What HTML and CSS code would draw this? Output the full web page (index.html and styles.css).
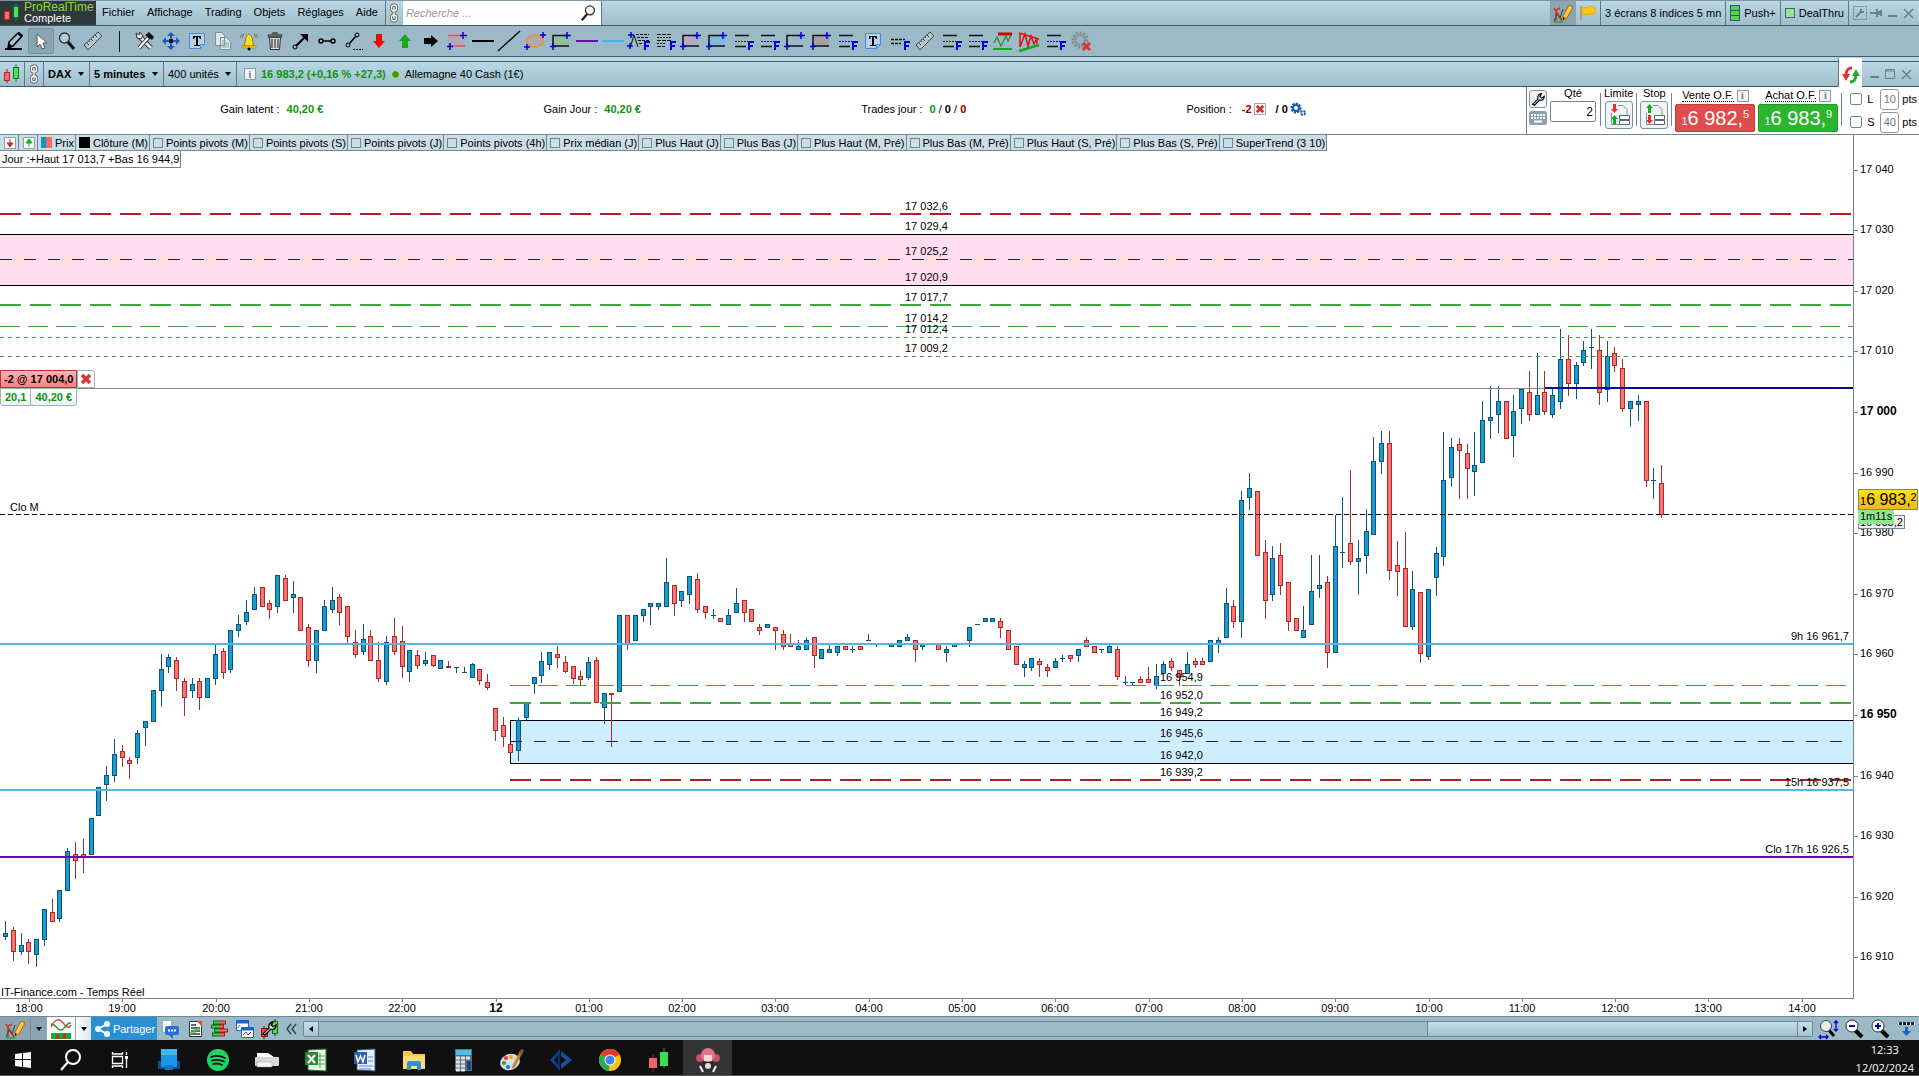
FILE: index.html
```
<!DOCTYPE html>
<html lang="fr">
<head>
    <meta charset="UTF-8">
    <meta name="viewport" content="width=device-width, initial-scale=1.0">
    <title>ProRealTime - DAX 5 minutes</title>
    <link rel="stylesheet" href="styles.css">
</head>
<body>
    <!-- Shared icons -->
    <svg class="defs" aria-hidden="true">
        <symbol id="i-candles" viewBox="0 0 18 20"><path d="M4 5v14" stroke="#a11" /><path d="M13 0v18" stroke="#185" /><rect x="1.500" y="8.500" width="5" height="8" fill="#f36b6b" stroke="#b22" /><rect x="10.500" y="3.500" width="5" height="11" fill="#4ddf5e" stroke="#196b2a" /></symbol>
        <symbol id="i-chain" viewBox="0 0 12 20"><g fill="none" stroke="#555" stroke-width="3"><rect x="3.500" y="2" width="5" height="6" rx="2.500" /><rect x="3.500" y="12" width="5" height="6" rx="2.500" /><path d="M6 6v8" /></g><g fill="none" stroke="#eee" stroke-width="1.500"><rect x="3.500" y="2" width="5" height="6" rx="2.500" /><rect x="3.500" y="12" width="5" height="6" rx="2.500" /><path d="M6 6v8" /></g></symbol>
        <symbol id="i-pencil" viewBox="0 0 24 24"><path d="M5 19l1-6L15 4l4 3-9 10z" fill="#a4c1cd" stroke="#000" stroke-width="1.500" /><path d="M5 19l1-5 3 3zM14 5l2-2 4 3-2 2z" /><path d="M2 20h17" stroke="#000" stroke-width="2" /></symbol>
        <symbol id="i-cursor" viewBox="0 0 24 24"><path d="M8 5v13l3-3 2 5 3-1-2-5h4z" fill="#fff" stroke="#555" /></symbol>
        <symbol id="i-lens" viewBox="0 0 24 24"><path d="M13 13l6 7" stroke="#111" stroke-width="3" /><circle cx="9.500" cy="9" r="5" fill="#b9cdd6" stroke="#333" stroke-width="1.300" /></symbol>
        <symbol id="i-ruler" viewBox="0 0 24 24"><path d="M3 16L17 3l4 4L7 21z" fill="#b3c5cd" stroke="#444" /><path d="M6 14l2 2M8 12l1 1M10 10l2 2M12 8l1 1M14 6l2 2" stroke="#444" fill="none" /></symbol>
        <symbol id="i-tools" viewBox="0 0 24 24"><path d="M5 6l13 13" stroke="#333" stroke-width="5" /><path d="M5 6l13 13" stroke="#eee" stroke-width="3" /><path d="M6 19L16 8" stroke="#333" stroke-width="4" /><path d="M6 19L15 9" stroke="#fff" stroke-width="2" /><path d="M12 6l4-3 5 5-2 3z" fill="#111" /><path d="M3 4l1 5 4 1 2-3-3-4-1 3z" fill="#eee" stroke="#333" /></symbol>
        <symbol id="i-move" viewBox="0 0 24 24"><path d="M12 3l4 4H8zM12 21l4-4H8zM3 12l4-4v8zM21 12l-4-4v8z" fill="#1c59c9" /><path d="M11 7h2v3h-2zM11 14h2v3h-2zM7 11h3v2H7zM14 11h3v2h-3z" fill="#1c59c9" /><path d="M10 10h4v4h-4z" fill="#111" /></symbol>
        <symbol id="i-text" viewBox="0 0 24 24"><path d="M4.500 4.500h15v11l-4 4h-11z" fill="#b5d3e4" stroke="#4b87e8" /><path d="M15.500 19.500v-4h4" fill="none" stroke="#4b87e8" /><path d="M8 7h8v3h-1l-1-2h-1v8h2v1H9v-1h2V8h-1l-1 2H8z" /></symbol>
        <symbol id="i-copy" viewBox="0 0 24 24"><path d="M4.500 3.500h6l3 3v10h-9zM9.500 8.500h6l4 4v8h-10z" fill="#dfe7ea" stroke="#7b8f98" /><path d="M11 12h4M11 14h7M11 16h7M11 18h7" stroke="#8aa" /></symbol>
        <symbol id="i-bell" viewBox="0 0 24 24"><path d="M7 17c2-2 0-10 5-12 5 2 3 10 5 12z" fill="#ffdc2d" stroke="#a07400" /><path d="M5 17h14v2H5z" fill="#f7c600" stroke="#a07400" stroke-width=".5" /><circle cx="12" cy="20" r="1.500" /><path d="M5 5L3 9M19 5l2 4M7 4L5 9M17 4l2 5" stroke="#777" fill="none" /></symbol>
        <symbol id="i-trash" viewBox="0 0 24 24"><path d="M6.500 8.500h11l-1 12h-9z" fill="#ddd" stroke="#333" /><path d="M5.500 6h13v2h-13zM10 5V4h4v1M9 10v9M12 10v9M15 10v9" stroke="#444" fill="none" stroke-width="1.300" /></symbol>
        <symbol id="i-arrow" viewBox="0 0 24 24"><path d="M6 18L16 8" stroke="#000" stroke-width="2" /><path d="M11 5h8v8z" /><circle cx="6" cy="18" r="2" fill="#9bb9c7" stroke="#000" /></symbol>
        <symbol id="i-segment" viewBox="0 0 24 24"><path d="M8 12h8" stroke="#000" stroke-width="1.500" /><circle cx="6" cy="12" r="2" fill="none" stroke="#000" stroke-width="1.500" /><circle cx="18" cy="12" r="2" fill="none" stroke="#000" stroke-width="1.500" /></symbol>
        <symbol id="i-slope" viewBox="0 0 24 24"><path d="M8 15l7-8" stroke="#000" stroke-width="1.500" /><circle cx="7" cy="16" r="2" fill="none" stroke="#000" /><circle cx="16" cy="6" r="2" fill="none" stroke="#000" /><path d="M12 20.500h10" stroke="#000" stroke-dasharray="2 1" /></symbol>
        <symbol id="i-up" viewBox="0 0 24 24"><path d="M12 5l6 7h-3v7H9v-7H6z" /></symbol>
        <symbol id="i-right" viewBox="0 0 24 24"><path d="M5 9h7V6l7 6-7 6v-3H5z" /></symbol>
        <symbol id="i-zone" viewBox="0 0 24 24"><path d="M3 6.500h17v10H3z" /><path d="M3 6.500h17M3 17h17" stroke-width="1.500" stroke="currentColor" /><path d="M18 3v7M15 6.500h7M5 14v7M2 17.500h6" stroke="#00d" stroke-width="1.500" /></symbol>
        <symbol id="i-box" viewBox="0 0 24 24"><path d="M4 6.500h16v10H4z" /><path d="M20 6.500H4V17h16" stroke-width="1.500" stroke="#111" fill="none" /><path d="M18 3v7M15 6.500h7M4 14v7M1 17.500h6" stroke="#00d" stroke-width="1.500" /></symbol>
        <symbol id="i-hline" viewBox="0 0 24 24"><path d="M1 12h22" stroke="currentColor" stroke-width="2" /></symbol>
        <symbol id="i-diag" viewBox="0 0 24 24"><path d="M1 22L23 2" stroke="#111" stroke-width="1.500" /></symbol>
        <symbol id="i-ellipse" viewBox="0 0 24 24"><ellipse cx="12" cy="12" rx="8" ry="6" fill="#b0a9ae" stroke="#f18a3c" stroke-width="1.500" /><path d="M20 3v6M17 6h6M4 15v6M1 18h6" stroke="#00d" stroke-width="1.500" /></symbol>
        <symbol id="i-fibo" viewBox="0 0 24 24"><path d="M4 6.500h14M4 17.500h11" stroke="#111" stroke-width="1.500" /><path d="M4 12.500h14" stroke="#00d" stroke-dasharray="2 1" /><path d="M18 21v-8h5M18 17h4" fill="none" stroke="#00d" stroke-width="2" /></symbol>
        <symbol id="i-rows" viewBox="0 0 24 24"><path d="M4 5.500h14M4 11.500h14M4 17.500h8" stroke="#111" stroke-dasharray="4 1" /><path d="M4 8.500h14M4 14.500h8" stroke="#111" stroke-dasharray="2 1" /><path d="M18 21v-8h5M18 17h4" fill="none" stroke="#00d" stroke-width="2" /></symbol>
        <symbol id="i-abc" viewBox="0 0 24 24"><path d="M3 19l4-13 4 12" fill="none" stroke="#111" /><path d="M9 5.500h13M10 8.500h12M11 11.500h11M12 14.500h4" stroke="#111" stroke-dasharray="3 1" /><path d="M4 3v6M1 6h6M3 14v6M0 17h6" stroke="#00d" stroke-width="1.500" /><path d="M18 21v-8h5M18 17h4" fill="none" stroke="#00d" stroke-width="2" /></symbol>
        <symbol id="i-short" viewBox="0 0 24 24"><path d="M4 10.500h14M4 14.500h10" stroke="#111" stroke-dasharray="3 1" stroke-width="1.500" /><path d="M18 21v-8h5M18 17h4" fill="none" stroke="#00d" stroke-width="2" /></symbol>
        <symbol id="i-range" viewBox="0 0 24 24"><path d="M7 5h14" stroke="#c00" stroke-width="3" /><path d="M3 14l3-6 4 9 5-10 2 5 3-6" fill="none" stroke="#292" stroke-width="1.300" /><path d="M2 20h19" stroke="#1a2" stroke-width="2" /></symbol>
        <symbol id="i-wedge" viewBox="0 0 24 24"><path d="M2 4l20 6M3 4v14l5-13 3 12 3-10 3 8 3-6v6" fill="none" stroke="#d11" stroke-width="1.500" /><path d="M2 22l20-6" stroke="#1a2" stroke-width="2.500" /></symbol>
        <symbol id="i-gone" viewBox="0 0 24 24"><circle cx="11" cy="11" r="6" fill="none" stroke="#80919a" stroke-width="5" stroke-dasharray="2 1" /><path d="M14 14l7 7M21 14l-7 7" stroke="#d33" stroke-width="3" /></symbol>
        <symbol id="i-search" viewBox="0 0 20 20"><path d="M8 11l-6 7" stroke="#222" stroke-width="2.500" /><circle cx="11" cy="7" r="5" fill="#eef2f4" stroke="#333" stroke-width="1.500" /></symbol>
        <symbol id="i-drawchart" viewBox="0 0 22 22"><path d="M2 6l8 13M4 19V8l4-2" stroke="#c33" stroke-width="1.500" fill="none" /><path d="M2 19l3-7 3 4 3-9" stroke="#253" fill="none" /><path d="M2 20h9" stroke="#2a4" stroke-width="1.500" /><path d="M11 18v-4l6-11 4 2-6 11z" fill="#ffc83c" stroke="#a36a10" /><path d="M11 18v-3l2 1z" /></symbol>
        <symbol id="i-flag" viewBox="0 0 20 20"><path d="M3 3v14" stroke="#a87" stroke-width="1.500" /><path d="M4 4c4 2 7-2 13 0v7c-6-1-8 2-13 0z" fill="#ffc61a" stroke="#f0a800" /></symbol>
        <symbol id="i-wrench" viewBox="0 0 18 18"><path d="M3 15l6-6c-1-3 1-6 4-6l-2 3 2 2 3-2c0 4-3 5-5 4l-6 6z" fill="#fff" stroke="currentColor" stroke-width="1.300" /></symbol>
        <symbol id="i-keyboard" viewBox="0 0 18 14"><rect width="18" height="14" rx="2" fill="#8ba2ae" /><path d="M2 4h14M2 7h14" stroke="#fff" stroke-width="2" stroke-dasharray="2 1" /><path d="M5 10.500h8" stroke="#fff" stroke-width="2" /></symbol>
        <symbol id="i-limit" viewBox="0 0 24 24"><path d="M11 2.500h5l4 4v6M4.500 10v11.500h8" fill="none" stroke="#889" /><path d="M6 1h3v5h2l-3.500 4L4 6h2z" fill="#d33" /><path d="M6 21h3v-5h2l-3.500-4L4 16h2z" fill="#1a2" /><path d="M12.500 12.500h10v4h-10zM12.500 17.500h10v4h-10z" fill="#fff" stroke="#567" /></symbol>
        <symbol id="i-stop" viewBox="0 0 24 24"><path d="M11 2.500h5l4 4v6M4.500 10v11.500h8" fill="none" stroke="#889" /><path d="M6 10h3V5h2L7.500 1 4 5h2z" fill="#1a2" /><path d="M6 12h3v5h2l-3.500 4L4 17h2z" fill="#d33" /><path d="M12.500 12.500h10v4h-10zM12.500 17.500h10v4h-10z" fill="#fff" stroke="#567" /></symbol>
        <symbol id="i-cross" viewBox="0 0 12 12"><path d="M2 2l8 8M10 2l-8 8" stroke="#d03838" stroke-width="3.500" /></symbol>
        <symbol id="i-min" viewBox="0 0 14 14"><path d="M3 10h9" stroke="#67818e" stroke-width="2" /></symbol>
        <symbol id="i-max" viewBox="0 0 14 14"><path d="M2.500 2.500h9v9h-9zM2 4h10" stroke="#67818e" fill="none" /></symbol>
        <symbol id="i-close" viewBox="0 0 14 14"><path d="M3 3l9 9M12 3l-9 9" stroke="#67818e" stroke-width="1.500" /></symbol>
        <symbol id="i-swap" viewBox="0 0 20 20"><path d="M11 3C6 3 5 6 5 11" fill="none" stroke="#d33" stroke-width="3" /><path d="M1 9l4 7 4-7z" fill="#d33" /><path d="M9 17c5 0 6-3 6-8" fill="none" stroke="#2a3" stroke-width="3" /><path d="M11 11l4-7 4 7z" fill="#2a3" /></symbol>
        <symbol id="i-gears" viewBox="0 0 16 14"><circle cx="6" cy="6" r="4" fill="none" stroke="#1b5ba8" stroke-width="3" stroke-dasharray="2 1" /><circle cx="6" cy="6" r="3" fill="none" stroke="#1b5ba8" stroke-width="2" /><circle cx="13" cy="11" r="2" fill="none" stroke="#1b5ba8" stroke-width="2" stroke-dasharray="2 1" /></symbol>
    </svg>

    <header class="menubar">
        <div class="logo">
            <svg width="18" height="20"><use href="#i-candles" /></svg>
            <div><b>ProRealTime</b><span>Complete</span></div>
        </div>
        <nav class="menu">
            <a href="#">Fichier</a><a href="#">Affichage</a><a href="#">Trading</a><a href="#">Objets</a><a href="#">Réglages</a><a href="#">Aide</a>
        </nav>
        <button class="chain" aria-label="Lier"><svg width="12" height="20"><use href="#i-chain" /></svg></button>
        <div class="search">
            <input type="text" placeholder="Recherche ..." aria-label="Recherche">
            <svg width="18" height="18"><use href="#i-search" /></svg>
        </div>
        <div class="menubar-right">
            <button class="cell pressed" aria-label="Dessin"><svg width="22" height="22"><use href="#i-drawchart" /></svg></button>
            <button class="cell" aria-label="Drapeau"><svg width="20" height="20"><use href="#i-flag" /></svg></button>
            <span class="cell ruled workspace">3 écrans 8 indices 5 mn</span>
            <span class="cell ruled"><i class="push"></i>Push+</span>
            <span class="cell ruled"><i class="deal"></i>DealThru</span>
            <span class="cell ruled window-buttons">
                <svg width="14" height="14"><rect x=".5" y=".5" width="13" height="13" fill="none" stroke="#67818e" stroke-dasharray="2 1" /><path d="M3 11l6-6M8 3v3h3" fill="none" stroke="#67818e" stroke-width="2" /></svg>
                <svg width="14" height="14"><path d="M1 7h6M8 3v8M12 4v6" stroke="#67818e" stroke-width="2" /><path d="M8 5h5v4H8z" fill="#67818e" /></svg>
                <svg width="14" height="14"><use href="#i-min" /></svg>
                <svg width="14" height="14"><use href="#i-close" /></svg>
            </span>
        </div>
    </header>

    <div class="toolbar" id="toolbar"></div>
    <div class="strip"></div>

    <div class="docbar">
        <span class="cell"><svg width="18" height="20"><use href="#i-candles" /></svg></span>
        <button class="cell ruled" aria-label="Lier"><svg width="12" height="20"><use href="#i-chain" /></svg></button>
        <label class="cell ruled drop bold"><select aria-label="Instrument"><option>DAX</option></select></label>
        <label class="cell ruled drop bold"><select aria-label="Unité de temps"><option>5 minutes</option></select></label>
        <label class="cell ruled drop"><select aria-label="Historique"><option>400 unités</option></select></label>
        <div class="cell ruled quote">
            <button class="info">i</button>
            <b class="green">16 983,2 (+0,16 % +27,3)</b>
            <i class="dot"></i>
            <span>Allemagne 40 Cash (1€)</span>
        </div>
        <div class="docbar-right">
            <button class="swap" aria-label="Trading"><svg width="20" height="20"><use href="#i-swap" /></svg></button>
            <svg width="14" height="14"><use href="#i-min" /></svg>
            <svg width="14" height="14"><use href="#i-max" /></svg>
            <svg width="14" height="14"><use href="#i-close" /></svg>
        </div>
    </div>

    <section class="trading">
        <div class="gains">
            <div><span>Gain latent :</span><b class="green">40,20 €</b></div>
            <div><span>Gain Jour :</span><b class="green">40,20 €</b></div>
            <div><span>Trades jour :</span><span><b class="green">0</b> / <b>0</b> / <b class="darkred">0</b></span></div>
            <div class="position"><span>Position :</span><b class="darkred">-2</b><button class="kill" aria-label="Fermer la position"><svg width="10" height="10"><use href="#i-cross" /></svg></button><b class="total">/ 0</b><svg width="16" height="14"><use href="#i-gears" /></svg></div>
        </div>
        <div class="order">
            <div class="order-tools">
                <button class="square" aria-label="Options"><svg width="16" height="16"><use href="#i-wrench" /></svg></button>
                <svg width="18" height="14"><use href="#i-keyboard" /></svg>
            </div>
            <div class="stack qty"><label for="qty">Qté</label><input type="text" id="qty" value="2"></div>
            <div class="stack sep"><span>Limite</span><button class="ticket" aria-label="Ordre limite"><svg width="24" height="24"><use href="#i-limit" /></svg></button></div>
            <div class="stack sep"><span>Stop</span><button class="ticket" aria-label="Ordre stop"><svg width="24" height="24"><use href="#i-stop" /></svg></button></div>
            <div class="stack sep deal-col">
                <span><u>Vente O.F.</u><button class="info">i</button></span>
                <button class="price sell"><small>1</small>6 982,<sup>5</sup></button>
            </div>
            <div class="stack deal-col">
                <span><u>Achat O.F.</u><button class="info">i</button></span>
                <button class="price buy"><small>1</small>6 983,<sup>9</sup></button>
            </div>
            <div class="protect sep">
                <div><input type="checkbox" id="use-l"><label for="use-l">L</label><input type="text" value="10" aria-label="Limite en points"><span>pts</span></div>
                <div><input type="checkbox" id="use-s"><label for="use-s">S</label><input type="text" value="40" aria-label="Stop en points"><span>pts</span></div>
            </div>
        </div>
    </section>

    <main class="chart">
        <div class="plot">
            <svg id="plot" width="100%" height="100%"></svg>
            <div class="legend">
                <button aria-label="Réduire"><svg width="14" height="14"><path d="M1.500 1.500h11v11h-11z" fill="#fff" stroke="#8ba2ae" /><path d="M7 3v5M4 7l3 4 3-4z" fill="#d22" stroke="#d22" /></svg></button>
                <button aria-label="Agrandir"><svg width="14" height="14"><path d="M1.500 1.500h11v11h-11z" fill="#fff" stroke="#8ba2ae" /><path d="M7 11V6M4 7l3-4 3 4z" fill="#1a2" stroke="#1a2" /></svg></button>
                <span><i class="swatch price-colors"></i>Prix</span>
                <span><i class="swatch black"></i>Clôture (M)</span>
                <label><input type="checkbox">Points pivots (M)</label>
                <label><input type="checkbox">Points pivots (S)</label>
                <label><input type="checkbox">Points pivots (J)</label>
                <label><input type="checkbox">Points pivots (4h)</label>
                <label><input type="checkbox">Prix médian (J)</label>
                <label><input type="checkbox">Plus Haut (J)</label>
                <label><input type="checkbox">Plus Bas (J)</label>
                <label><input type="checkbox">Plus Haut (M, Pré)</label>
                <label><input type="checkbox">Plus Bas (M, Pré)</label>
                <label><input type="checkbox">Plus Haut (S, Pré)</label>
                <label><input type="checkbox">Plus Bas (S, Pré)</label>
                <label><input type="checkbox">SuperTrend (3 10)</label>
            </div>
            <div class="day-range">Jour :+Haut 17 013,7 +Bas 16 944,9</div>
            <div class="open-position">
                <div><b class="entry">-2 @ 17 004,0</b><button aria-label="Fermer"><svg width="12" height="12"><use href="#i-cross" /></svg></button></div>
                <div><b class="green pnl">20,1</b><b class="green pnl last">40,20 €</b></div>
            </div>
            <div class="source">IT-Finance.com - Temps Réel</div>
        </div>
        <div class="price-axis">
            <svg id="price-axis" width="100%" height="100%"></svg>
            <div class="close-tag">16 983,2</div>
            <div class="last-tag"><small>1</small>6 983,<sup>2</sup></div>
            <div class="timer-tag">1m11s</div>
        </div>
    </main>
    <svg class="time-axis" id="time-axis" width="100%" height="17"></svg>

    <div class="bottombar">
        <button class="pressed draw" aria-label="Dessin"><svg width="22" height="22"><use href="#i-drawchart" /></svg></button>
        <button class="caret pressed" aria-label="Menu dessin"></button>
        <button class="white" aria-label="Indicateurs"><svg width="28" height="22"><path d="M4 9c5-10 9-8 13-3s5 4 7 1" fill="none" stroke="#d44" stroke-width="1.500" /><path d="M4 6c5 0 6 6 10 6s5-8 10-7" fill="none" stroke="#292" stroke-width="1.500" /><path d="M4 15h20v6H4z" fill="#1a3" /><path d="M9 21v-4h3v4M16 21v-5h3v5" fill="#d22" /></svg></button>
        <button class="caret light" aria-label="Menu indicateurs"></button>
        <button class="share"><svg width="18" height="18"><path d="M14 4L5 9l9 5" fill="none" stroke="#fff" stroke-width="2" /><circle cx="14" cy="4" r="3" fill="#fff" /><circle cx="5" cy="9" r="3" fill="#fff" /><circle cx="14" cy="14" r="3" fill="#fff" /></svg>Partager</button>
        <div class="bottom-icons">
            <svg width="20" height="20"><path d="M2.500 1.500h9v12h-9z" fill="#fff" stroke="#7ba" /><rect x="5" y="7" width="14" height="9" rx="2" fill="#2a6fd8" /><path d="M13 16v4l-4-4z" fill="#2a6fd8" /><path d="M8 11.500h9" stroke="#fff" stroke-width="2" stroke-dasharray="2 1" /></svg>
            <svg width="20" height="20"><path d="M4.500 2.500h12v15h-12z" fill="#fff" stroke="#333" /><path d="M12 2h5v6z" fill="#e44" /><path d="M6 6h5M6 9h9M6 12h9M6 15h9" stroke="#333" stroke-width="1.500" /><path d="M5 13l10-6v4L5 17z" fill="#3b4" opacity=".7" /></svg>
            <svg width="20" height="20"><path d="M3 3.500h7M1 7.500h9M4 11.500h6M2 15.500h8" stroke="#175f20" stroke-width="4" /><path d="M10 3.500h6M10 7.500h4M10 11.500h8M10 15.500h5" stroke="#a11f1f" stroke-width="4" /><path d="M4 3.500h6M2 7.500h8M5 11.500h5M3 15.500h7" stroke="#3ed44d" stroke-width="2" /><path d="M10 3.500h5M10 7.500h3M10 11.500h7M10 15.500h4" stroke="#f66" stroke-width="2" /></svg>
            <svg width="20" height="20"><path d="M1.500 1.500h12v10h-12z" fill="#fff" stroke="#1b64c8" /><path d="M1 3h13" stroke="#1b64c8" stroke-width="3" /><path d="M6.500 8.500h12v10h-12z" fill="#fff" stroke="#1b64c8" /><path d="M6 10h13" stroke="#1b64c8" stroke-width="3" /><path d="M8 16l3-3 2 3 3-3" fill="none" stroke="#d22" /><path d="M3 9l2-3" stroke="#2a2" /></svg>
            <svg width="20" height="20"><path d="M4 7v13M15 0v17" stroke="#222" /><path d="M1.500 9.500h6v8h-6z" fill="#e44" stroke="#911" /><path d="M12.500 2.500h5v12h-5z" fill="#4d5" stroke="#161" /><g color="#000"><use href="#i-wrench" width="18" height="18" /></g></svg>
            <svg width="14" height="20"><path d="M6 5l-4 5 4 5M11 5l-4 5 4 5" fill="none" stroke="#345" stroke-width="1.500" /></svg>
        </div>
        <div class="scrollbar">
            <button class="scroll-btn left" aria-label="Reculer"></button>
            <div class="track"></div>
            <div class="thumb"></div>
            <button class="scroll-btn right" aria-label="Avancer"></button>
        </div>
        <div class="zooms">
            <svg width="22" height="22"><path d="M11 11l6 7" stroke="#000" stroke-width="3" /><circle cx="9" cy="8" r="5.500" fill="#e8edef" stroke="#444" /><path d="M19 3v9M17 5l2-2 2 2M17 11l2 2 2-2M2 19h9M4 17l-2 2 2 2M9 17l2 2-2 2" fill="none" stroke="#00d" stroke-width="1.300" /></svg>
            <svg width="22" height="22"><path d="M12 12l7 7" stroke="#000" stroke-width="4" /><circle cx="9" cy="8" r="6" fill="#fff" stroke="#333" /><path d="M6 8h6" stroke="#00c" stroke-width="2" /></svg>
            <svg width="22" height="22"><path d="M12 12l7 7" stroke="#000" stroke-width="4" /><circle cx="9" cy="8" r="6" fill="#fff" stroke="#333" /><path d="M6 8h6M9 5v6" stroke="#00c" stroke-width="2" /></svg>
            <svg width="22" height="22"><path d="M2.500 3.500h18v4h-18z" fill="#fff" stroke="#9ab" /><path d="M4 5.500h15" stroke="#222" stroke-width="3" stroke-dasharray="3 1" /><path d="M10 9h3v4h3l-4.500 5L7 13h3z" fill="#1b64c8" /></svg>
        </div>
    </div>

    <footer class="taskbar">
        <button aria-label="Démarrer"><svg width="24" height="24"><path d="M4 6l7-1v6H4zM12 5l8-1v7h-8zM4 12h7v7l-7-1zM12 12h8v8l-8-1z" fill="#fff" /></svg></button>
        <button aria-label="Rechercher"><svg width="24" height="24"><circle cx="14" cy="9" r="7" fill="none" stroke="#fff" stroke-width="2" /><path d="M9 14l-7 8" stroke="#fff" stroke-width="2" /></svg></button>
        <button aria-label="Vue des tâches"><svg width="24" height="24"><path d="M4.500 8.500h10v7h-10zM4.500 4v2h10V4M4.500 20v-2h10v2M18.500 4v3M18.500 9v11" fill="none" stroke="#fff" stroke-width="1.300" /><path d="M17 8h3v3h-3z" fill="#fff" /></svg></button>
        <button aria-label="Bureau à distance"><svg width="26" height="24"><path d="M2 13h22v8H2z" fill="#0c4f91" /><path d="M5 1h16v18H5z" fill="#1698e8" /><path d="M5 1h16v6H5z" fill="#42b6f5" /><path d="M9 17h8v5H9z" fill="#0d76c6" /></svg></button>
        <button aria-label="Spotify"><svg width="24" height="24"><circle cx="12" cy="12" r="11" fill="#1ed760" /><path d="M5 9c5-2 10-1 14 1M6 12.500c4-1 8-1 12 1M7 16c4-1 6-1 9 1" fill="none" stroke="#111" stroke-width="1.800" stroke-linecap="round" /></svg></button>
        <button aria-label="Imprimante"><svg width="26" height="24"><path d="M3 5h11l6 4v3H3z" fill="#fff" /><rect x="1" y="9" width="24" height="9" rx="1" fill="#d5d8da" /><path d="M3 14h15v5H3z" fill="#f4f4f4" stroke="#999" stroke-width=".5" /></svg></button>
        <button aria-label="Excel"><svg width="24" height="24"><path d="M4 2l18-1v22L4 22z" fill="#e8f3e6" stroke="#287a35" /><path d="M16 5v15M21 8h-7M21 12h-7M21 16h-7" stroke="#57a35b" /><path d="M1 4h13v13H1z" fill="#2d8537" /><path d="M4 7l7 8M11 7l-7 8" stroke="#fff" stroke-width="2" /></svg></button>
        <button aria-label="Word"><svg width="24" height="24"><path d="M4 2l18-1v22L4 22z" fill="#e6eef8" stroke="#2b5797" /><path d="M6 18h14M15 9h5M15 13h5M6 21h12" stroke="#5e88bf" /><path d="M1 4h13v12H1z" fill="#2b5fb0" /><path d="M3 7l2 7 2.500-6L10 14l2-7" fill="none" stroke="#fff" stroke-width="1.500" /></svg></button>
        <button aria-label="Explorateur"><svg width="24" height="24"><path d="M1 3h8l2 3h12v15H1z" fill="#f9c646" /><path d="M1 8h22v13H1z" fill="#ffdb74" /><path d="M5 22v-7q0-2 2-2h10q2 0 2 2v7h-4v-4H9v4z" fill="#2e8fd8" /></svg></button>
        <button aria-label="Calculatrice"><svg width="24" height="24"><path d="M4 1h17v22H4z" fill="#5e6d78" /><path d="M5 2h15v5H5z" fill="#3fc3ee" /><path d="M5 10h15M5 14h10M5 18h10M5 22h10" stroke="#dfe5e8" stroke-width="3" stroke-dasharray="4 1" /><path d="M16 13h4v9h-4z" fill="#124a7c" /></svg></button>
        <button aria-label="Paint"><svg width="26" height="24"><ellipse cx="11" cy="14" rx="10" ry="8" fill="#cfdde8" transform="rotate(-20 11 14)" /><circle cx="5" cy="15" r="2" fill="#29a329" /><circle cx="7" cy="10" r="2" fill="#e33" /><circle cx="12" cy="9" r="2" fill="#f5a21b" /><circle cx="9" cy="19" r="2" fill="#2a6fd8" /><path d="M14 20L22 4" stroke="#c9812e" stroke-width="3" /><path d="M20 6l2-5 3 1-2 5z" fill="#8a5225" /></svg></button>
        <button aria-label="Application"><svg width="24" height="24"><path d="M11 1L1 12l10 11v-4l-6-7 6-7z" fill="#123f8c" /><path d="M12 3l11 9-11 9v-5l5-4-5-4z" fill="#1b4ea0" /><path d="M10 6v12" stroke="#0d2f6e" stroke-width="2" /></svg></button>
        <button aria-label="Chrome"><svg width="24" height="24"><circle cx="12" cy="12" r="11" fill="#fbc116" /><path d="M12 12L2.500 6.500A11 11 0 0 1 21.500 6.500z" fill="#e33b2e" /><path d="M12 12L2.500 6.500A11 11 0 0 0 11 23z" fill="#2da94f" /><circle cx="12" cy="12" r="5.500" fill="#fff" /><circle cx="12" cy="12" r="4.500" fill="#4285f4" /></svg></button>
        <button aria-label="ProRealTime"><svg width="24" height="24"><path d="M6 6v18" stroke="#a22" /><path d="M17 0v20" stroke="#2a3" /><path d="M2 10h8v10H2z" fill="#f06565" /><path d="M13 4h8v14h-8z" fill="#3edc52" /></svg></button>
        <button class="active" aria-label="Capture"><svg width="26" height="26"><circle cx="5" cy="11" r="4" fill="#c94f6d" /><circle cx="21" cy="11" r="4" fill="#c94f6d" /><circle cx="13" cy="8" r="7" fill="#e2738d" /><path d="M9 8h8v6H9z" fill="#f8d9c8" /><path d="M7 15h12v9H7z" fill="#2b2b30" /><circle cx="13" cy="19" r="3" fill="#ddd" /><path d="M5 19l3 6M21 19l-3 6" stroke="#eee" stroke-width="2" /></svg></button>
        <div class="clock"><span>12:33</span><span>12/02/2024</span></div>
    </footer>

    <script>
        // Drawing toolbar, one 26px slot per tool: [icon, fill, color]
        const tools = [
            ['pencil'], ['cursor'], ['lens'], ['ruler'], ['bar'], ['tools'], ['move'], ['text'], ['copy'], ['bell'], ['trash'],
            ['arrow'], ['segment'], ['slope'], ['down', '#f00'], ['up', '#1aa81a'], ['right', '#000'], ['zone', '#b1a9b8', '#e05555'],
            ['hline', '', '#000'], ['diag'], ['ellipse'], ['box', '#8fbf9f'], ['hline', '', '#6a0dad'], ['hline', '', '#45b4ee'],
            ['abc'], ['rows'], ['box', '#b7a9c8'], ['box', '#7fb9d6'], ['fibo'], ['fibo'], ['box', 'none'], ['box', '#a99fa4'],
            ['fibo'], ['text'], ['short'], ['ruler'], ['fibo'], ['fibo'], ['range'], ['wedge'], ['fibo'], ['gone']
        ];
        document.getElementById('toolbar').innerHTML = tools.map(([name, fill, color]) => {
            if (name === 'bar') return '<span class="tool-sep"></span>';
            const cls = name === 'cursor' ? 'tool pressed' : name === 'down' ? 'tool flip' : 'tool';
            const icon = name === 'down' ? 'up' : name;
            return `<button class="${cls}" aria-label="${name}"><svg width="24" height="24" fill="${fill || '#000'}" color="${color || '#000'}"><use href="#i-${icon}" /></svg></button>`;
        }).join('');

        // Vertical positions are counted from the top of the window
        const TOP = 135;
        const STEP = 7.775;
        const FIRST = 5;

        // up/down, high, body top, body bottom, low
        const candles = `
            u 921 933 937 940,d 927 930 952 961,u 933 945 952 955,d 939 942 952 964,u 939 939 955 967,u 909 909 940 946
            d 899 912 922 922,u 890 890 919 922,u 848 851 891 891,d 842 854 861 879,d 839 854 857 873,u 818 818 855 855
            u 787 787 816 816,u 766 775 785 801,u 739 754 776 782,d 745 751 758 767,d 757 760 764 779,u 730 733 758 764
            u 721 721 728 746,u 690 690 722 722,u 654 669 691 707,u 654 657 667 673,d 657 660 679 691,d 678 681 698 716
            u 678 684 691 698,d 678 681 698 710,u 678 678 698 698,u 645 654 679 685,d 648 651 673 679,u 630 630 670 673
            u 615 624 631 637,u 600 612 622 625,u 587 594 610 610,d 587 587 607 607,d 600 603 610 619,u 575 575 607 613
            d 575 578 601 601,u 581 594 598 613,d 597 597 631 631,d 624 627 661 667,u 630 630 661 673,u 600 606 631 631
            u 587 600 610 613,d 594 597 613 625,d 606 606 637 643,d 630 642 655 658,u 624 639 652 655,d 630 636 661 661
            d 642 660 679 682,u 636 642 682 685,d 618 636 652 655,d 626 641 667 678,u 650 650 672 682,d 650 655 666 669
            u 652 660 664 666,d 655 655 666 667,u 660 660 669 669,d 661 666 668 668,u 667 667 668 673,u 667 672 673 673
            u 663 664 678 678,d 669 669 681 685,d 674 682 688 690,d 708 708 731 741,d 717 725 737 747,d 744 744 753 753
            u 717 720 751 761,u 703 703 718 720,u 677 677 684 694,u 652 661 676 683,u 652 652 665 670,d 646 654 658 668
            d 656 662 672 673,d 666 666 679 684,d 671 676 680 685,u 657 662 678 680,d 657 660 703 703,u 693 693 708 724
            d 693 693 695 747,u 615 615 692 692,d 615 615 644 650,u 615 615 641 641,u 609 609 616 622,u 603 603 607 625
            u 603 603 607 610,u 558 582 607 607,d 585 585 604 616,u 591 591 601 607,u 576 576 595 604,d 573 579 610 613
            d 606 606 613 619,u 609 615 616 619,d 618 618 622 622,u 609 615 625 625,u 588 603 613 613,d 600 600 613 622
            d 609 609 622 622,d 624 627 631 635,u 624 624 628 628,d 627 627 631 650,d 630 634 647 650,d 634 643 647 647
            u 640 646 650 650,u 637 640 650 650,d 637 637 656 668,u 649 649 659 659,u 645 649 653 653,u 646 646 653 656
            d 646 646 650 650,u 646 649 650 653,d 646 646 650 650,u 634 640 641 641,u 644 644 645 647,u 643 643 645 645
            u 643 643 647 647,u 640 640 647 647,u 634 637 641 641,d 640 640 650 662,u 643 643 647 650,u 643 643 645 645
            d 643 643 650 650,u 646 649 653 662,u 643 643 647 647,u 643 643 645 645,u 627 627 641 647,u 624 624 625 625
            u 618 618 622 622,u 618 618 622 622,d 618 621 628 638,d 630 630 650 650,d 646 646 665 665,u 661 664 668 677
            u 658 658 668 671,d 658 661 665 677,d 664 667 671 677,u 658 661 668 668,u 655 658 659 662,d 655 655 659 662
            u 649 649 656 662,d 637 640 647 647,d 646 646 653 653,u 649 649 650 653,u 645 646 653 653,d 646 649 677 680
            u 676 682 683 685,u 682 682 683 685,d 676 679 683 683,d 667 679 683 683,u 664 676 686 689,u 661 664 674 674
            d 658 661 668 671,d 670 670 677 686,u 652 664 674 674,d 658 661 665 668,d 658 661 665 665,u 640 640 662 662
            u 637 640 644 653,u 588 603 638 638,d 600 606 622 628,u 491 500 622 638,u 473 488 498 510,d 491 491 556 556
            d 540 552 601 619,u 546 558 595 601,d 543 555 586 595,d 582 582 622 631,d 618 618 631 631,u 606 630 638 638
            u 555 591 625 625,u 555 585 589 598,d 576 582 653 668,u 515 546 653 653,u 497 552 553 568,d 470 543 562 565
            u 540 558 562 595,u 509 531 556 574,u 437 461 535 535,u 431 443 462 474,d 431 443 571 580,d 541 565 572 596
            d 532 568 627 627,u 571 589 627 630,d 592 592 654 663,u 589 589 657 660,u 547 553 578 596,u 432 480 557 566
            u 438 447 478 487,d 438 444 451 499,d 444 453 469 499,u 432 465 472 496,u 401 420 463 463,u 386 417 421 439
            u 386 401 415 433,d 401 401 439 439,u 395 411 436 457,u 389 389 409 424,d 371 392 415 421,u 353 395 415 415
            d 371 392 412 415,u 388 395 415 418,u 329 359 402 409,d 335 359 384 396,u 362 365 384 399,u 341 350 363 366
            u 329 347 348 369,d 335 350 393 405,u 341 356 390 402,d 347 353 366 372,d 359 368 409 412,u 401 401 409 427
            u 395 401 405 421,d 401 401 481 487,u 468 480 481 499,d 465 483 515 518`.trim().split(/,|\n/);

        const line = (cls, y, x = 0) => `<line class="${cls}" x1="${x}" x2="100%" y1="${y - TOP}" y2="${y - TOP}" />`;
        const zone = (cls, x, y, h) => `<rect class="zone ${cls}" x="${x}" y="${y - TOP}" width="101%" height="${h}" />`;
        const label = (x, y, text) => `<text x="${x}" y="${y - TOP + 4}">${text}</text>`;
        const endLabel = (y, text) => `<text x="100%" dx="-4" y="${y - TOP + 4}" text-anchor="end">${text}</text>`;

        let out = zone('pink', -2, 234, 51) + zone('blue', 510, 720, 43);

        candles.forEach((row, i) => {
            const [dir, high, top, bottom, low] = row.trim().split(' ');
            const x = Math.round(FIRST + i * STEP);
            out += `<g class="${dir === 'u' ? 'up' : 'down'}">` +
                `<rect class="wick" x="${x}" y="${high - TOP}" width="1" height="${Math.max(low - high, 1)}" />` +
                `<rect class="edge" x="${x - 2}" y="${top - TOP}" width="5" height="${bottom - top}" />`;
            if (bottom - top > 2) {
                out += `<rect class="body" x="${x - 1}" y="${+top + 1 - TOP}" width="3" height="${bottom - top - 2}" />`;
            }
            out += '</g>';
        });

        out += line('red thick long', 214) + line('navy mid', 259) + line('green thick long', 305) +
            line('green wide', 326) + line('green short', 337) + line('green short', 356) +
            line('grey', 388) + line('position-line', 388, 1545) + line('black dash', 514) +
            line('sky', 644) + line('sky', 790) + line('purple', 857) +
            line('green wide', 685, 510) + line('green thick long', 703, 510) + line('navy mid', 741, 510) + line('red thick long', 780, 510);

        [[206, '17 032,6'], [226, '17 029,4'], [251, '17 025,2'], [277, '17 020,9'], [297, '17 017,7'], [318, '17 014,2'], [329, '17 012,4'], [348, '17 009,2']]
            .forEach(([y, text]) => out += label(905, y, text));
        [[677, '16 954,9'], [695, '16 952,0'], [712, '16 949,2'], [733, '16 945,6'], [755, '16 942,0'], [772, '16 939,2']]
            .forEach(([y, text]) => out += label(1160, y, text));
        out += label(10, 507, 'Clo M') + endLabel(636, '9h 16 961,7') + endLabel(782, '15h 16 937,5') + endLabel(849, 'Clo 17h 16 926,5');
        document.getElementById('plot').innerHTML = out;

        // Price axis, 10 points every 60.6px
        let prices = '';
        for (let p = 17040; p >= 16910; p -= 10) {
            const y = Math.round(412 + (17000 - p) * 6.06 - TOP);
            prices += `<line class="tick" x1="0" x2="4" y1="${y}" y2="${y}" />` +
                `<text class="${p % 50 ? '' : 'bold'}" x="6" y="${y + 3}">${Math.floor(p / 1000)} ${String(p % 1000).padStart(3, '0')}</text>`;
        }
        document.getElementById('price-axis').innerHTML = prices;

        // Time axis
        const hours = ['18:00', '19:00', '20:00', '21:00', '22:00', '12', '01:00', '02:00', '03:00', '04:00', '05:00', '06:00', '07:00', '08:00', '09:00', '10:00', '11:00', '12:00', '13:00', '14:00'];
        document.getElementById('time-axis').innerHTML = hours.map((h, i) => {
            const x = Math.round(29 + i * STEP * 12);
            return `<line class="tick" x1="${x}" x2="${x}" y1="0" y2="3" /><text class="${h === '12' ? 'bold' : ''}" x="${x}" y="13" text-anchor="middle">${h}</text>`;
        }).join('');
    </script>
</body>
</html>
```

FILE: styles.css
```
* {
    box-sizing: border-box;
}
body {
    margin: 0;
    height: 100vh;
    display: flex;
    flex-direction: column;
    font-family: "Liberation Sans", Arial, sans-serif;
    font-size: 11px;
    color: #000;
    background: #fff;
    overflow: hidden;
}
button, input, select {
    font: inherit;
    color: inherit;
    margin: 0;
    padding: 0;
    border: 0;
    background: none;
}
button {
    display: flex;
    align-items: center;
    justify-content: center;
}
a {
    color: inherit;
    text-decoration: none;
}
svg {
    display: block;
    flex: none;
}
.defs {
    position: absolute;
    width: 0;
    height: 0;
}
.green {
    color: #0b960b;
}
.darkred {
    color: #8b0000;
}
.bold {
    font-weight: bold;
}

/* Menu bar */
.menubar {
    display: flex;
    height: 26px;
    border-top: 1px solid #7c95a1;
    border-bottom: 1px solid #3f5a68;
    background: linear-gradient(#b9d7e4, #9fbecb);
}
.logo {
    display: flex;
    align-items: center;
    gap: 3px;
    width: 96px;
    padding-left: 3px;
    background: #2f383d;
    color: #fff;
    line-height: 11px;
}
.logo b {
    display: block;
    color: #8fdc2c;
    font-size: 12px;
    font-weight: normal;
}
.menu {
    display: flex;
    align-items: center;
    gap: 12px;
    padding: 0 7px 2px 6px;
}
.chain {
    width: 18px;
    border-left: 1px solid #5d7785;
}
.search {
    display: flex;
    align-items: center;
    width: 199px;
    padding: 0 3px;
    background: #fff;
    border-right: 1px solid #5d7785;
}
.search input {
    flex: 1;
    min-width: 0;
    outline: none;
}
.search input::placeholder {
    color: #9a9a9a;
    font-style: italic;
}
.cell {
    display: flex;
    align-items: center;
    padding: 0 5px;
}
.ruled {
    border-left: 1px solid #5d7785;
}
.menubar-right {
    display: flex;
    margin-left: auto;
}
.menubar-right .cell {
    gap: 4px;
    padding: 0 4px;
}
.menubar-right button.cell {
    padding: 0 2px;
}
.pressed {
    background: #8aa5b1;
}
.push {
    width: 10px;
    height: 16px;
    border: 1px solid #356;
    background: repeating-linear-gradient(#4fd84f 0 4px, #356 4px 5px);
}
.deal {
    width: 10px;
    height: 10px;
    border: 1px solid #467;
    background: #90e890;
}
.window-buttons svg + svg {
    margin-left: -2px;
}

/* Drawing tools */
.toolbar {
    display: flex;
    align-items: center;
    height: 31px;
    padding-left: 2px;
    background: #9bb9c7;
    border-bottom: 1px solid #3f5a68;
}
.tool {
    width: 26px;
    height: 26px;
}
.tool.pressed {
    border: 1px solid #76909c;
    border-radius: 2px;
}
.flip svg {
    transform: rotate(180deg);
}
.tool-sep {
    width: 26px;
    height: 21px;
    background: linear-gradient(#111, #111) center / 1px 100% no-repeat;
}
.strip {
    height: 5px;
    background: #b9d7e4;
    border-bottom: 1px solid #3f5a68;
}

/* Chart header */
.docbar {
    display: flex;
    height: 25px;
    background: linear-gradient(#b9d7e4, #9fbecb);
    border-bottom: 1px solid #3f5a68;
}
.docbar > .cell {
    padding: 0 3px;
}
.docbar > .drop {
    padding: 0 5px 0 4px;
}
.drop select {
    appearance: none;
    outline: none;
}
.drop::after {
    content: "";
    margin-left: 6px;
    border: 3px solid transparent;
    border-top: 4px solid #000;
    border-bottom: 0;
}
.docbar > .quote {
    gap: 5px;
    padding-left: 7px;
}
.info {
    width: 12px;
    height: 12px;
    border: 1px solid #8b9ba3;
    background: #eef2f4;
    color: #6d7c84;
    font: bold 10px "Liberation Serif", serif;
}
.dot {
    width: 9px;
    height: 9px;
    border-radius: 50%;
    background: #3f9a0d;
    border: 1px solid #cfe8b5;
}
.docbar-right {
    display: flex;
    align-items: center;
    gap: 2px;
    margin-left: auto;
    padding-right: 6px;
}
.swap {
    position: relative;
    width: 24px;
    height: 29px;
    margin: -4px 3px 0 0;
    padding-top: 5px;
    background: #fff;
    border-left: 1px solid #5d7785;
}

/* Trading panel */
.trading {
    display: flex;
    height: 48px;
    border-bottom: 1px solid #6f8792;
}
.gains {
    flex: 1;
    display: flex;
    align-items: center;
    justify-content: space-evenly;
    padding-bottom: 4px;
}
.gains > div {
    display: flex;
    align-items: center;
    gap: 7px;
}
.gains .position {
    gap: 2px;
}
.position span {
    margin-right: 8px;
}
.position .total {
    margin-left: 8px;
}
.kill {
    width: 12px;
    height: 12px;
    border: 1px solid #c0a0a0;
}
.order {
    display: flex;
    padding: 1px 2px 0;
    border-left: 1px solid #6f8792;
}
.order-tools {
    display: grid;
    align-content: start;
    gap: 3px;
    padding-top: 2px;
}
.square, .ticket {
    border: 1px solid #7f949f;
    border-radius: 3px;
    background: #f0f4f6;
}
.square {
    width: 18px;
    height: 18px;
}
.stack {
    display: flex;
    flex-direction: column;
    align-items: center;
}
.stack > label, .stack > span {
    height: 13px;
    line-height: 11px;
}
.sep {
    padding: 0 3px 0 4px;
    background: linear-gradient(#6f8792, #6f8792) 0 5px / 1px 33px no-repeat;
}
.qty {
    padding: 0 4px 0 3px;
}
.qty input {
    width: 46px;
    height: 21px;
    padding-right: 2px;
    border: 1px solid #6f8792;
    border-radius: 2px;
    text-align: right;
    font-size: 12px;
}
.ticket {
    width: 28px;
    height: 28px;
}
.deal-col {
    padding-right: 3px;
}
.stack.deal-col > span {
    display: flex;
    align-items: center;
    gap: 3px;
    height: 15px;
    margin-bottom: 1px;
}
.deal-col u {
    text-decoration: none;
    border-bottom: 1px dotted #000;
}
.price {
    align-items: baseline;
    width: 80px;
    height: 28px;
    border-radius: 2px;
    color: #fff;
    font-size: 20px;
    line-height: 26px;
}
.price small, .price sup {
    font-size: 11px;
    line-height: 11px;
}
.price sup {
    align-self: flex-start;
    margin-top: 4px;
}
.sell {
    background: #e04b4b;
    border: 1px solid #c73a3a;
}
.buy {
    background: #2db52d;
    border: 1px solid #1f9c1f;
}
.protect {
    display: grid;
    align-content: start;
    gap: 1px;
    padding: 0 0 0 9px;
}
.protect > div {
    display: flex;
    align-items: center;
    gap: 3px;
    height: 22px;
}
.protect label {
    width: 10px;
    margin-left: 2px;
}
.protect input[type=text] {
    width: 19px;
    height: 21px;
    border: 1px solid #8b9ba3;
    border-radius: 3px;
    text-align: center;
    color: #777;
}
input[type=checkbox] {
    appearance: none;
    width: 12px;
    height: 12px;
    border: 1px solid #6f8792;
    border-radius: 2px;
}

/* Chart */
.chart {
    flex: 1;
    display: flex;
    min-height: 0;
}
.plot {
    position: relative;
    flex: 1;
    min-width: 0;
    border-right: 1px solid #6f8792;
    border-bottom: 1px solid #6f8792;
}
.plot > svg, .price-axis > svg {
    position: absolute;
    shape-rendering: crispEdges;
}
.legend {
    position: absolute;
    top: 0;
    left: 0;
    display: flex;
    height: 16px;
    border-bottom: 1px solid #6f8792;
    background: #cbdde6;
    white-space: nowrap;
}
.legend > * {
    display: flex;
    align-items: center;
    gap: 3px;
    padding: 0 1px 0 3px;
    border-right: 1px solid #6f8792;
}
.legend input {
    width: 10px;
    height: 10px;
    border-radius: 0;
}
.swatch {
    width: 11px;
    height: 11px;
}
.price-colors {
    background: linear-gradient(90deg, #1292c8 50%, #f76b6b 50%);
}
.black {
    background: #000;
}
.day-range {
    position: absolute;
    top: 16px;
    left: 0;
    padding: 2px 1px 2px 2px;
    border: 1px solid #6f8792;
    border-width: 0 1px 1px 0;
    background: #fff;
}
.open-position {
    position: absolute;
    top: 235px;
    left: 0;
}
.open-position > div {
    display: flex;
    height: 18px;
}
.open-position b, .open-position button {
    display: flex;
    align-items: center;
    padding: 0 3px;
    border: 1px solid #9fb0b8;
}
.open-position .entry {
    border-color: #b33;
    background: linear-gradient(#ffb4b4, #f78080);
}
.open-position button {
    padding: 0 2px;
    background: #fff;
    border-radius: 0 3px 0 0;
}
.open-position .pnl {
    padding: 0 4px;
    background: linear-gradient(#fff, #eef3f5);
    border-radius: 0 0 0 3px;
}
.open-position .last {
    margin-left: -1px;
    border-radius: 0 0 3px 0;
}
.source {
    position: absolute;
    left: 1px;
    bottom: 0;
}
.wick, .edge {
    stroke: none;
}
.up .wick, .up .edge {
    fill: #0d5478;
}
.up .body {
    fill: #179bd0;
}
.down .wick, .down .edge {
    fill: #a82c2c;
}
.down .body {
    fill: #fb7272;
}
.zone {
    stroke: #000;
}
.pink {
    fill: #ffdcef;
}
.blue {
    fill: #cfeeff;
}
.thick, .sky, .purple, .position-line {
    stroke-width: 2;
}
.red {
    stroke: #b0201f;
}
line.green {
    stroke: #3da63d;
}
.navy {
    stroke: #10109a;
}
.grey {
    stroke: #888;
}
.position-line {
    stroke: #0a0a96;
}
line.black {
    stroke: #000;
}
.sky {
    stroke: #5ab4e0;
}
.purple {
    stroke: #6c0aa3;
}
.long {
    stroke-dasharray: 21 9;
}
.wide {
    stroke-dasharray: 20 8;
}
.mid {
    stroke-dasharray: 12 12;
}
.short {
    stroke-dasharray: 4 4;
}
.dash {
    stroke-dasharray: 5 3;
}
.tick {
    stroke: #6f8792;
}
text.bold {
    font-size: 12px;
}

/* Price axis */
.price-axis {
    position: relative;
    width: 65px;
}
.close-tag, .last-tag, .timer-tag {
    position: absolute;
    left: 4px;
}
.close-tag {
    top: 380px;
    padding: 0 1px;
    border: 1px solid #6f8792;
    background: #eee;
    line-height: 12px;
}
.last-tag {
    top: 354px;
    display: flex;
    align-items: baseline;
    width: 60px;
    height: 21px;
    padding-left: 1px;
    border: 1px solid #8b8550;
    background: linear-gradient(#ffdf1a, #f0bb10);
    font-size: 16px;
    line-height: 19px;
}
.last-tag small, .last-tag sup {
    font-size: 11px;
    line-height: 11px;
}
.last-tag sup {
    align-self: flex-start;
    margin-top: 2px;
}
.timer-tag {
    top: 375px;
    width: 36px;
    height: 14px;
    padding-left: 2px;
    background: #8fe88f;
    line-height: 13px;
}
.time-axis {
    shape-rendering: crispEdges;
}

/* Bottom bar */
.bottombar {
    display: flex;
    height: 24px;
    border-top: 1px solid #6f8792;
    background: #9bb9c7;
}
.draw {
    width: 31px;
    border-right: 1px solid #76909c;
}
.caret {
    width: 15px;
}
.caret::after {
    content: "";
    border: 3px solid transparent;
    border-top: 4px solid #000;
    border-bottom: 0;
}
.white {
    width: 30px;
    background: #fff;
    border: 1px solid #8aa5b1;
    border-width: 0 1px;
}
.light {
    background: linear-gradient(90deg, #fff, #dbe5ea);
}
.share {
    gap: 2px;
    width: 66px;
    background: #2b8fd3;
    color: #fff;
}
.bottom-icons {
    display: flex;
    align-items: center;
    gap: 5px;
    padding-left: 3px;
}
.scrollbar {
    flex: 1;
    display: flex;
    height: 16px;
    margin: 4px 4px;
    border: 1px solid #6f8792;
    border-radius: 2px;
}
.scroll-btn {
    width: 15px;
    background: linear-gradient(#c4e0ec, #a5c4d0);
}
.scroll-btn::after {
    content: "";
    border: 3px solid transparent;
}
.left {
    border-right: 1px solid #6f8792;
}
.left::after {
    border-right: 4px solid #000;
    border-left: 0;
}
.right {
    border-left: 1px solid #6f8792;
}
.right::after {
    border-left: 4px solid #000;
    border-right: 0;
}
.track {
    flex: 3;
}
.thumb {
    flex: 1;
    border-left: 1px solid #6f8792;
    background: linear-gradient(#c4e0ec, #9fbecb);
}
.zooms {
    display: flex;
    align-items: center;
    gap: 4px;
    padding-right: 2px;
}

/* Windows taskbar */
.taskbar {
    display: flex;
    height: 36px;
    background: #101010;
    border-bottom: 1px solid #555;
}
.taskbar button {
    width: 49px;
    padding-top: 4px;
}
.taskbar button:first-child {
    width: 46px;
}
.taskbar .active {
    background: #333;
}
.clock {
    display: flex;
    flex-direction: column;
    justify-content: space-between;
    align-items: center;
    margin-left: auto;
    padding: 1px 5px 0 0;
    color: #fff;
    font-family: "Open Sans", sans-serif;
    font-size: 11px;
    line-height: 18px;
}
```
